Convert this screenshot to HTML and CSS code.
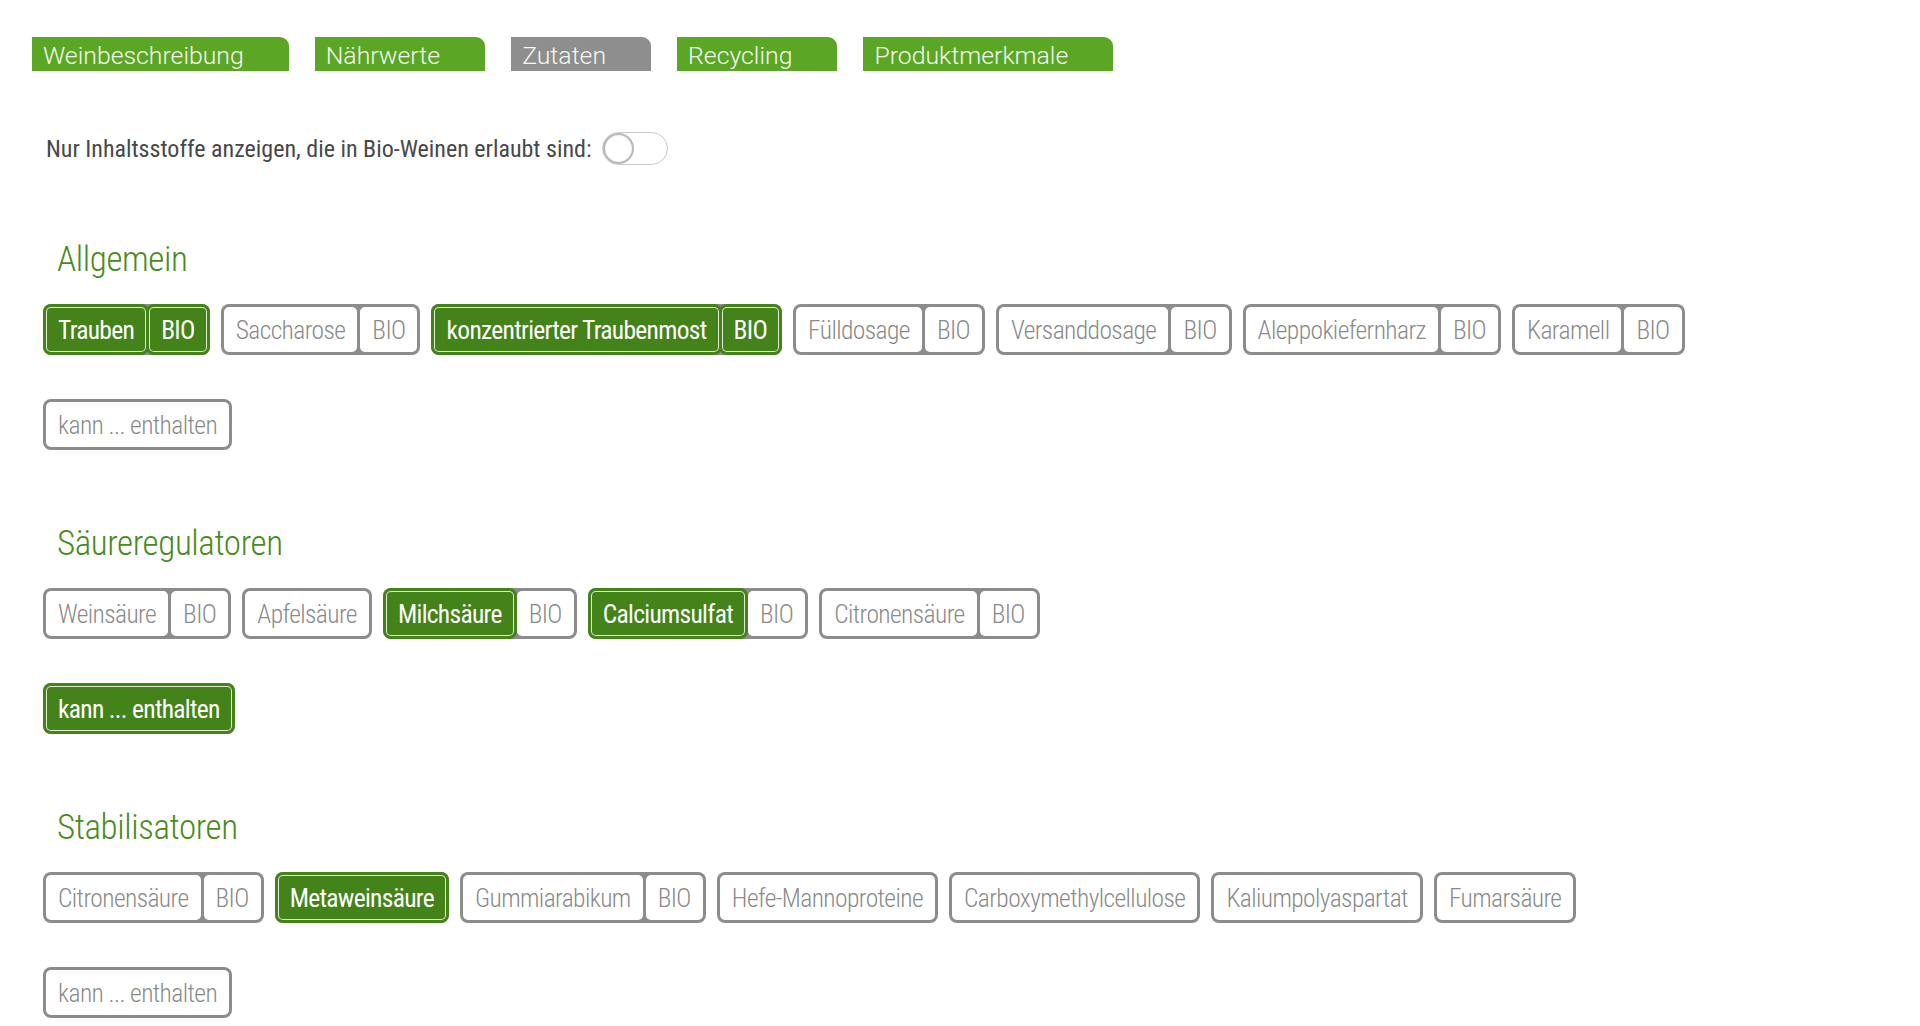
FILE: index.html
```html
<!DOCTYPE html>
<html lang="de">
<head>
  <meta charset="UTF-8">
  <meta name="viewport" content="width=device-width, initial-scale=1.0">
  <title>Zutaten</title>
  <link rel="stylesheet" href="styles.css">
</head>
<body>
  <div class="page">
    <nav class="tabs">
      <a class="tab">Weinbeschreibung</a>
      <a class="tab">Nährwerte</a>
      <a class="tab tab-active">Zutaten</a>
      <a class="tab">Recycling</a>
      <a class="tab">Produktmerkmale</a>
    </nav>

    <div class="filter">
      <span>Nur Inhaltsstoffe anzeigen, die in Bio-Weinen erlaubt sind:</span>
      <label class="switch"><span class="knob"></span></label>
    </div>

    <section class="group">
      <h3>Allgemein</h3>
      <div class="chips">
        <div class="chip"><span class="seg on">Trauben</span><span class="seg on">BIO</span></div>
        <div class="chip"><span class="seg">Saccharose</span><span class="seg">BIO</span></div>
        <div class="chip"><span class="seg on">konzentrierter Traubenmost</span><span class="seg on">BIO</span></div>
        <div class="chip"><span class="seg">Fülldosage</span><span class="seg">BIO</span></div>
        <div class="chip"><span class="seg">Versanddosage</span><span class="seg">BIO</span></div>
        <div class="chip"><span class="seg">Aleppokiefernharz</span><span class="seg">BIO</span></div>
        <div class="chip"><span class="seg">Karamell</span><span class="seg">BIO</span></div>
      </div>
      <div class="chips chips-more">
        <div class="chip"><span class="seg">kann ... enthalten</span></div>
      </div>
    </section>

    <section class="group">
      <h3>Säureregulatoren</h3>
      <div class="chips">
        <div class="chip"><span class="seg">Weinsäure</span><span class="seg">BIO</span></div>
        <div class="chip"><span class="seg">Apfelsäure</span></div>
        <div class="chip"><span class="seg on">Milchsäure</span><span class="seg">BIO</span></div>
        <div class="chip"><span class="seg on">Calciumsulfat</span><span class="seg">BIO</span></div>
        <div class="chip"><span class="seg">Citronensäure</span><span class="seg">BIO</span></div>
      </div>
      <div class="chips chips-more">
        <div class="chip"><span class="seg on">kann ... enthalten</span></div>
      </div>
    </section>

    <section class="group">
      <h3>Stabilisatoren</h3>
      <div class="chips">
        <div class="chip"><span class="seg">Citronensäure</span><span class="seg">BIO</span></div>
        <div class="chip"><span class="seg on">Metaweinsäure</span></div>
        <div class="chip"><span class="seg">Gummiarabikum</span><span class="seg">BIO</span></div>
        <div class="chip"><span class="seg">Hefe-Mannoproteine</span></div>
        <div class="chip"><span class="seg">Carboxymethylcellulose</span></div>
        <div class="chip"><span class="seg">Kaliumpolyaspartat</span></div>
        <div class="chip"><span class="seg">Fumarsäure</span></div>
      </div>
      <div class="chips chips-more">
        <div class="chip"><span class="seg">kann ... enthalten</span></div>
      </div>
    </section>
  </div>
</body>
</html>
```

FILE: styles.css
```css
body {
  margin: 0;
  background: #fff;
  font-family: "Roboto Condensed", Roboto, "Liberation Sans", sans-serif;
  font-stretch: condensed;
  color: #444;
}
.page {
  padding: 37px 0 0 32px;
}
.tabs {
  display: flex;
  gap: 26px;
}
.tab {
  display: block;
  height: 34px;
  line-height: 37px;
  padding: 0 45px 0 11px;
  background: #5ba625;
  color: #f4f8f0;
  font-family: Roboto, "Liberation Sans", sans-serif;
  font-stretch: normal;
  font-size: 24.8px;
  font-weight: 300;
  border-top-right-radius: 9px;
  cursor: pointer;
}
.tab-active {
  background: #8e8e8e;
}
.filter {
  display: flex;
  align-items: center;
  gap: 10px;
  margin: 61px 0 0 14px;
  font-size: 24px;
  color: #484848;
}
.switch {
  position: relative;
  display: block;
  width: 64px;
  height: 31px;
  border: 1px solid #c9c9c9;
  border-radius: 17px;
  background: #fff;
}
.knob {
  position: absolute;
  left: 0;
  top: 0;
  width: 27px;
  height: 27px;
  border: 2px solid #b8b8b8;
  border-radius: 50%;
  background: #fff;
  box-shadow: inset 0 0 2px #ddd;
}
.group {
  margin-top: 73px;
}
.group + .group {
  margin-top: 72px;
}
.group h3 {
  margin: 0 0 22px 25px;
  height: 44px;
  line-height: 44px;
  font-size: 35px;
  font-weight: 300;
  letter-spacing: -0.4px;
  color: #4a8a1d;
}
.chips {
  display: flex;
  flex-wrap: wrap;
  gap: 11px;
  padding-left: 11px;
}
.chips-more {
  margin-top: 44px;
}
.chip {
  display: flex;
  gap: 3px;
  padding: 3px;
  background: #8c8c8c;
  border-radius: 8px;
}
.seg {
  display: flex;
  align-items: center;
  height: 45px;
  padding: 0 12px;
  background: #fff;
  border-radius: 5px;
  color: #8a8a8a;
  font-size: 25.5px;
  font-weight: 300;
  letter-spacing: -0.6px;
}
.seg.on {
  background: #44821a;
  color: #fff;
  font-weight: 400;
  letter-spacing: -0.7px;
  box-shadow: 0 0 0 3px #44821a, inset 0 0 0 1px #dfe9d4;
}
```
